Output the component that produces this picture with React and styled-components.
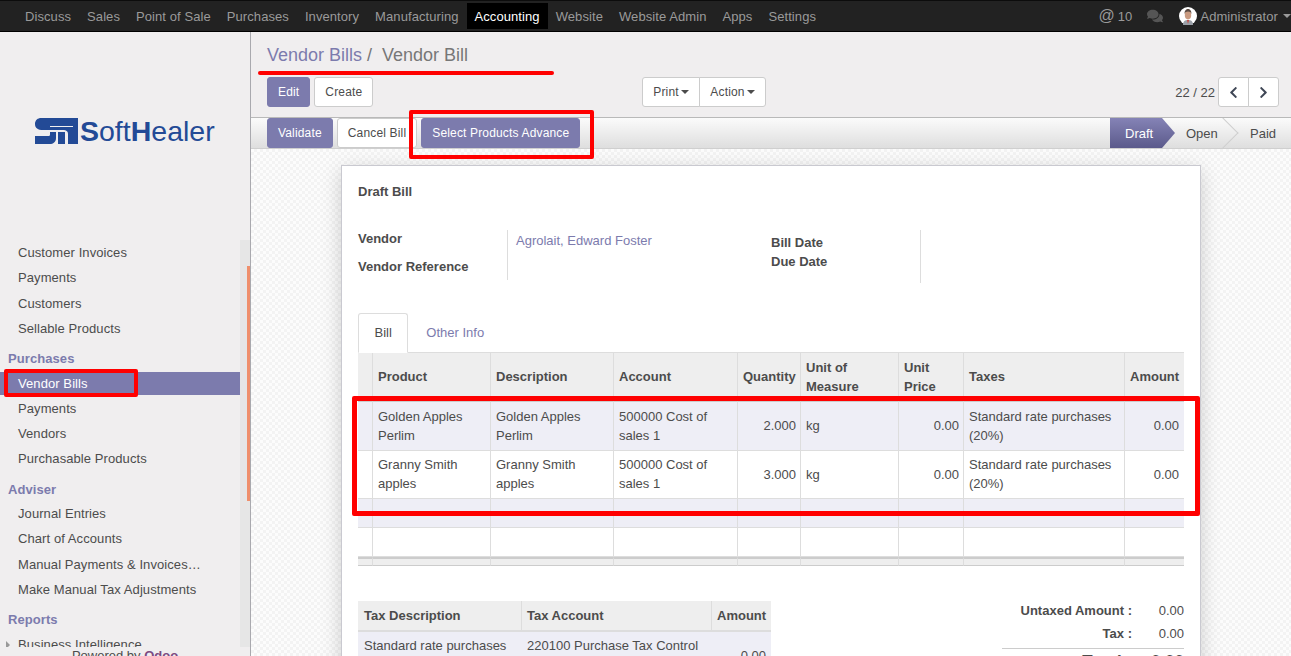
import React from "react";
import styled, { createGlobalStyle } from "styled-components";
import { FaComments, FaChevronLeft, FaChevronRight } from "react-icons/fa";

const GlobalStyle = createGlobalStyle`
  * { box-sizing: border-box; }
  html, body { margin: 0; height: 100%; overflow: hidden; }
  body {
    font-family: "Liberation Sans", Arial, sans-serif;
    font-size: 13px;
    color: #4c4c4c;
  }
`;

const Page = styled.div`
  position: relative;
  display: flex;
  flex-direction: column;
  height: 656px;
  overflow: hidden;
`;

const TopBar = styled.nav`
  display: flex;
  align-items: center;
  flex: none;
  height: 32px;
  padding: 0 0 0 17px;
  background: #222;
  border-top: 1px solid #0c0c0c;
  border-bottom: 1px solid #000;
  letter-spacing: 0.08px;
`;

const TopLink = styled.a`
  display: flex;
  align-items: center;
  height: 26px;
  padding: 0 8px;
  color: ${(p) => (p.$active ? "#fff" : "#9a9a9a")};
  background: ${(p) => (p.$active ? "#000" : "transparent")};
`;

const TopRight = styled.div`
  display: flex;
  align-items: center;
  margin-left: auto;
  color: #9a9a9a;
`;

const AtSign = styled.span`
  font-size: 16px;
  margin-right: 3px;
`;

const Count = styled.span`
  margin-right: 15px;
`;

const ChatIcon = styled(FaComments)`
  color: #555;
  font-size: 16px;
  margin-right: 16px;
`;

const Avatar = styled.svg`
  width: 18px;
  height: 18px;
  margin-right: 3px;
`;

const Caret = styled.span`
  display: inline-block;
  width: 0;
  height: 0;
  margin-left: ${(p) => p.$gap || 3}px;
  border-top: 4px solid ${(p) => p.$color || "currentColor"};
  border-left: 4px solid transparent;
  border-right: 4px solid transparent;
`;

const AdminMenu = styled.span`
  display: flex;
  align-items: center;
`;

const Body = styled.div`
  display: flex;
  flex: 1;
  min-height: 0;
`;

const Sidebar = styled.aside`
  display: flex;
  flex-direction: column;
  flex: none;
  width: 251px;
  background: #f0eeef;
  border-right: 1px solid #a9a9ae;
`;

const LogoBox = styled.div`
  display: flex;
  align-items: center;
  flex: none;
  height: 208px;
  padding: 0 0 10px 35px;
  color: #234a96;
  font-size: 28.5px;
  line-height: 1;
`;

const LogoMark = styled.svg`
  width: 43px;
  height: 26px;
  margin-right: 2px;
`;

const LogoStrong = styled.b`
  font-weight: 700;
`;

const MenuWrap = styled.div`
  display: flex;
  flex: 1;
  min-height: 0;
`;

const MenuList = styled.div`
  width: 240px;
  padding-top: 1px;
  overflow: hidden;
  letter-spacing: 0.08px;
`;

const Track = styled.div`
  display: flex;
  flex-direction: column;
  align-items: flex-end;
  width: 10px;
  padding-top: 26px;
  background: #e6e6e6;
`;

const Thumb = styled.div`
  width: 3px;
  height: 235px;
  background: #ef8f6c;
`;

const MenuTitle = styled.div`
  height: 23px;
  margin: 7px 0 1.5px;
  padding-left: 8px;
  line-height: 23px;
  font-weight: 700;
  color: #7c7bad;
`;

const MenuItem = styled.a`
  position: relative;
  display: block;
  height: 23.25px;
  margin-bottom: 2px;
  padding-left: 18px;
  line-height: 24px;
  white-space: nowrap;
  color: ${(p) => (p.$active ? "#fff" : "#4c4c4c")};
  background: ${(p) => (p.$active ? "#7c7bad" : "transparent")};

  ${(p) =>
    p.$arrow &&
    `&::before {
      content: "";
      position: absolute;
      left: 6px;
      top: 8px;
      border-left: 4px solid #999;
      border-top: 4px solid transparent;
      border-bottom: 4px solid transparent;
    }`}
`;

const PoweredBy = styled.div`
  flex: none;
  height: 9px;
  line-height: 18px;
  text-align: center;
  white-space: nowrap;
  background: #f0eeef;

  b {
    color: #7c4b82;
  }
`;

const Main = styled.main`
  display: flex;
  flex-direction: column;
  flex: 1;
  min-width: 0;
`;

const ControlPanel = styled.div`
  flex: none;
  height: 85px;
  padding: 0 12px 0 16px;
  background: #f0eeef;
`;

const Breadcrumb = styled.div`
  height: 45px;
  padding-top: 12px;
  font-size: 18px;
  line-height: 22px;
  color: #777;

  a {
    color: #7c7bad;
  }
`;

const ButtonRow = styled.div`
  display: flex;
  align-items: center;
`;

const LeftButtons = styled.div`
  display: flex;
  gap: 4px;
  width: 375px;
`;

const Button = styled.button`
  height: 30px;
  padding: 0 10px;
  border: 1px solid ${(p) => (p.$primary ? "#7c7bad" : "#ccc")};
  border-radius: 3px;
  background: ${(p) => (p.$primary ? "#7c7bad" : "#fff")};
  color: ${(p) => (p.$primary ? "#fff" : "#4c4c4c")};
  font: 12px "Liberation Sans", Arial, sans-serif;
  letter-spacing: 0.16px;
  white-space: nowrap;
`;

const Group = styled.div`
  display: flex;

  button {
    display: flex;
    align-items: center;
    justify-content: center;
    border-radius: 0;
  }
  button + button {
    margin-left: -1px;
  }
  button:first-child {
    border-radius: 3px 0 0 3px;
  }
  button:last-child {
    border-radius: 0 3px 3px 0;
  }
`;

const MenuButton = styled(Button)`
  width: ${(p) => p.$width}px;
  padding: 0;
`;

const Pager = styled.div`
  display: flex;
  align-items: center;
  margin-left: auto;
`;

const PagerText = styled.span`
  margin-right: 3px;
`;

const PagerButton = styled(Button)`
  width: 31px;
  padding: 0;
  color: #3f4756;
  font-size: 13px;
`;

const StatusBar = styled.div`
  display: flex;
  align-items: stretch;
  flex: none;
  height: 32px;
  padding-left: 16px;
  background: linear-gradient(#fbfbfb, #dedede);
  border-top: 1px solid #b9b9b9;
  border-bottom: 1px solid #cfcfcf;
`;

const StatusActions = styled.div`
  display: flex;
  gap: 4px;

  button {
    height: 30px;
  }
`;

const Steps = styled.div`
  display: flex;
  margin-left: auto;
`;

const Step = styled.div`
  position: relative;
  display: flex;
  align-items: center;
  width: ${(p) => p.$width}px;
  padding-left: ${(p) => p.$pad}px;
  overflow: hidden;
`;

const ActiveStep = styled(Step)`
  color: #fff;
  background: linear-gradient(#8583b6, #5b5a8b);
  clip-path: polygon(0 0, 52px 0, 100% 50%, 52px 100%, 0 100%);
`;

const ChevronStep = styled(Step)`
  &::after {
    content: "";
    position: absolute;
    right: 5px;
    top: 4px;
    width: 21px;
    height: 21px;
    transform: rotate(45deg);
    border-top: 1px solid #cfcfcf;
    border-right: 1px solid #cfcfcf;
  }
`;

const Content = styled.div`
  flex: 1;
  min-height: 0;
  padding: 16px 0 0 90px;
  overflow: hidden;
  background: repeating-conic-gradient(#f3f3f3 0 25%, #fcfcfc 0 50%) 0 0 / 6px 6px;
`;

const Sheet = styled.div`
  width: 860px;
  min-height: 600px;
  padding: 16px;
  background: #fff;
  border: 1px solid #c9c9d0;
  box-shadow: 0 5px 20px -1px rgba(0, 0, 0, 0.2);
`;

const SheetTitle = styled.div`
  height: 20px;
  line-height: 20px;
  font-weight: 700;
`;

const Fields = styled.div`
  display: flex;
  margin-top: 28px;
  height: 53px;
`;

const FieldColumn = styled.div`
  width: ${(p) => p.$width}px;
  height: ${(p) => p.$height}px;
  padding-top: ${(p) => p.$top || 0}px;
  border-right: ${(p) => (p.$line ? "1px solid #ddd" : "none")};
`;

const FieldLabel = styled.div`
  height: ${(p) => p.$height}px;
  line-height: ${(p) => p.$lineHeight || 19}px;
  font-weight: 700;
`;

const FieldValue = styled.a`
  display: block;
  padding: 1px 0 0 8px;
  line-height: 19px;
  color: #7c7bad;
`;

const Tabs = styled.div`
  display: flex;
  margin-top: 30px;
  height: 40px;
  border-bottom: 1px solid #ddd;
`;

const Tab = styled.a`
  display: flex;
  align-items: center;
  height: 40px;
  padding: 0 ${(p) => (p.$active ? 15.5 : 17)}px 2px;
  color: ${(p) => (p.$active ? "#4c4c4c" : "#7c7bad")};
  background: ${(p) => (p.$active ? "#fff" : "transparent")};
  border: 1px solid ${(p) => (p.$active ? "#ddd" : "transparent")};
  border-bottom-color: ${(p) => (p.$active ? "#fff" : "transparent")};
  border-radius: 3px 3px 0 0;
`;

const LinesTable = styled.table`
  width: 826px;
  table-layout: fixed;
  border-collapse: separate;
  border-spacing: 0;
`;

const HeadCell = styled.th`
  height: 49px;
  padding: 0 5px;
  line-height: 19px;
  text-align: ${(p) => (p.$right ? "right" : "left")};
  font-weight: 700;
  background: #eee;
  border-right: 1px solid #ddd;
  border-bottom: 2px solid #ccc;

  &:last-child {
    border-right: none;
  }
`;

const LineRow = styled.tr`
  height: ${(p) => p.$height}px;
  background: ${(p) => (p.$odd ? "#eeeef6" : "#fff")};
`;

const LineCell = styled.td`
  padding: 0 ${(p) => (p.$right ? 4 : 5)}px ${(p) => (p.$up ? 2 : 0)}px 5px;
  line-height: 19px;
  text-align: ${(p) => (p.$right ? "right" : "left")};
  border-right: 1px solid #ddd;
  border-bottom: 1px solid #ddd;

  &:last-child {
    border-right: none;
    padding-right: 5px;
  }
`;

const FootCell = styled.td`
  height: 9px;
  padding: 0;
  background: #eee;
  border-top: 2px solid #ccc;
  border-right: 1px solid #ddd;
  border-bottom: 1px solid #ccc;

  &:last-child {
    border-right: none;
  }
`;

const Bottom = styled.div`
  display: flex;
  justify-content: space-between;
  margin-top: 35px;
`;

const TaxTable = styled.table`
  width: 413px;
  table-layout: fixed;
  border-collapse: separate;
  border-spacing: 0;
`;

const TaxHead = styled.th`
  height: 31px;
  padding: 0 5px;
  text-align: ${(p) => (p.$right ? "right" : "left")};
  background: #eee;
  border-right: 1px solid #ddd;
  border-bottom: 2px solid #ddd;
  white-space: nowrap;

  &:first-child {
    padding-left: 6px;
  }
  &:last-child {
    border-right: none;
  }
`;

const TaxCell = styled.td`
  padding: 4px 5px;
  line-height: 19px;
  background: #eeeef6;
  vertical-align: ${(p) => (p.$right ? "middle" : "top")};
  text-align: ${(p) => (p.$right ? "right" : "left")};

  &:first-child {
    padding-left: 6px;
  }
`;

const Totals = styled.div`
  width: 182px;
  margin-top: -2px;
`;

const TotalRow = styled.div`
  display: flex;
  align-items: center;
  height: ${(p) => (p.$grand ? 26 : 23)}px;
  border-top: ${(p) => (p.$grand ? "1px solid #ccc" : "none")};
  margin-top: ${(p) => (p.$grand ? 3 : 0)}px;
  font-size: ${(p) => (p.$grand ? 17 : 13)}px;
  font-weight: ${(p) => (p.$grand ? 700 : 400)};
`;

const TotalLabel = styled.span`
  flex: 1;
  text-align: right;
  font-weight: 700;
`;

const TotalValue = styled.span`
  width: 52px;
  text-align: right;
`;

const RedBox = styled.div`
  position: absolute;
  left: ${(p) => p.$x}px;
  top: ${(p) => p.$y}px;
  width: ${(p) => p.$w}px;
  height: ${(p) => p.$h}px;
  border: ${(p) => p.$stroke}px solid #f00;
  border-radius: 2px;
  pointer-events: none;
`;

const RedLine = styled.div`
  position: absolute;
  left: 258px;
  top: 71px;
  width: 296px;
  height: 3.5px;
  background: #f00;
  border-radius: 2px;
`;

const topMenus = [
  "Discuss",
  "Sales",
  "Point of Sale",
  "Purchases",
  "Inventory",
  "Manufacturing",
  "Accounting",
  "Website",
  "Website Admin",
  "Apps",
  "Settings",
];

const lineColumns = [15, 118, 123, 124, 63, 98, 65, 161, 59];

const lines = [
  { name: "Golden Apples Perlim", qty: "2.000", height: 49, odd: true, numberUp: true },
  { name: "Granny Smith apples", qty: "3.000", height: 48, textUp: true },
];

function UserAvatar() {
  return (
    <Avatar viewBox="0 0 18 18">
      <circle cx="9" cy="9" r="9" fill="#fff" />
      <path d="M4 18c0-4 2-5 5-5s5 1 5 5z" fill="#9aa0a8" />
      <path d="M8 13h2l-1 4z" fill="#c9463c" />
      <ellipse cx="9" cy="8" rx="3.2" ry="4.4" fill="#c99a80" />
      <path d="M5.6 7c-.3-3.5 1.6-5 3.4-5s3.7 1.5 3.4 5c-.6-1.8-1.500-2.500-3.400-2.500S6.200 5.200 5.600 7z" fill="#5a4a42" />
    </Avatar>
  );
}

function SoftHealerMark() {
  return (
    <LogoMark viewBox="0 0 43 26">
      <path d="M6 0H43V26H33V16C33 13 31 12 28 12H8C3 12 0 10 0 6C0 2 3 0 6 0Z" fill="#234a96" />
      <path d="M15 8H38V9H15Z" fill="#f0eeef" />
      <path d="M0 18H13C14.5 18 15 17.500 15 16.500V14H21V20C21 24 18 26 15 26H0Z" fill="#234a96" />
      <path d="M23 14H30V26H23Z" fill="#234a96" />
    </LogoMark>
  );
}

export default function App() {
  return (
    <Page>
      <GlobalStyle />
      <TopBar>
        {topMenus.map((name) => (
          <TopLink key={name} $active={name === "Accounting"}>
            {name}
          </TopLink>
        ))}
        <TopRight>
          <AtSign>@</AtSign>
          <Count>10</Count>
          <ChatIcon />
          <UserAvatar />
          <AdminMenu>
            Administrator
            <Caret $gap={5} />
          </AdminMenu>
        </TopRight>
      </TopBar>

      <Body>
        <Sidebar>
          <LogoBox>
            <SoftHealerMark />
            <span>
              <LogoStrong>S</LogoStrong>oft<LogoStrong>H</LogoStrong>ealer
            </span>
          </LogoBox>
          <MenuWrap>
            <MenuList>
              <MenuItem>Customer Invoices</MenuItem>
              <MenuItem>Payments</MenuItem>
              <MenuItem>Customers</MenuItem>
              <MenuItem>Sellable Products</MenuItem>
              <MenuTitle>Purchases</MenuTitle>
              <MenuItem $active>Vendor Bills</MenuItem>
              <MenuItem>Payments</MenuItem>
              <MenuItem>Vendors</MenuItem>
              <MenuItem>Purchasable Products</MenuItem>
              <MenuTitle>Adviser</MenuTitle>
              <MenuItem>Journal Entries</MenuItem>
              <MenuItem>Chart of Accounts</MenuItem>
              <MenuItem>Manual Payments &amp; Invoices…</MenuItem>
              <MenuItem>Make Manual Tax Adjustments</MenuItem>
              <MenuTitle>Reports</MenuTitle>
              <MenuItem $arrow>Business Intelligence</MenuItem>
            </MenuList>
            <Track>
              <Thumb />
            </Track>
          </MenuWrap>
          <PoweredBy>
            Powered by <b>Odoo</b>
          </PoweredBy>
        </Sidebar>

        <Main>
          <ControlPanel>
            <Breadcrumb>
              <a>Vendor Bills</a> /&nbsp; Vendor Bill
            </Breadcrumb>
            <ButtonRow>
              <LeftButtons>
                <Button $primary>Edit</Button>
                <Button>Create</Button>
              </LeftButtons>
              <Group>
                <MenuButton $width={58}>
                  Print
                  <Caret $gap={2} />
                </MenuButton>
                <MenuButton $width={67}>
                  Action
                  <Caret $gap={2} />
                </MenuButton>
              </Group>
              <Pager>
                <PagerText>22 / 22</PagerText>
                <Group>
                  <PagerButton>
                    <FaChevronLeft />
                  </PagerButton>
                  <PagerButton>
                    <FaChevronRight />
                  </PagerButton>
                </Group>
              </Pager>
            </ButtonRow>
          </ControlPanel>

          <StatusBar>
            <StatusActions>
              <Button $primary>Validate</Button>
              <Button>Cancel Bill</Button>
              <Button $primary>Select Products Advance</Button>
            </StatusActions>
            <Steps>
              <ActiveStep $width={65} $pad={15}>
                Draft
              </ActiveStep>
              <ChevronStep $width={64} $pad={11}>
                Open
              </ChevronStep>
              <Step $width={52} $pad={11}>
                Paid
              </Step>
            </Steps>
          </StatusBar>

          <Content>
            <Sheet>
              <SheetTitle>Draft Bill</SheetTitle>
              <Fields>
                <FieldColumn $width={150} $height={50} $line>
                  <FieldLabel $height={28} $lineHeight={17}>
                    Vendor
                  </FieldLabel>
                  <FieldLabel $height={19} $lineHeight={17}>
                    Vendor Reference
                  </FieldLabel>
                </FieldColumn>
                <FieldColumn $width={263} $height={50}>
                  <FieldValue>Agrolait, Edward Foster</FieldValue>
                </FieldColumn>
                <FieldColumn $width={150} $height={53} $top={3} $line>
                  <FieldLabel $height={19}>Bill Date</FieldLabel>
                  <FieldLabel $height={19}>Due Date</FieldLabel>
                </FieldColumn>
              </Fields>

              <Tabs>
                <Tab $active>Bill</Tab>
                <Tab>Other Info</Tab>
              </Tabs>

              <LinesTable>
                <colgroup>
                  {lineColumns.map((w, i) => (
                    <col key={i} width={w} />
                  ))}
                </colgroup>
                <thead>
                  <tr>
                    <HeadCell />
                    <HeadCell>Product</HeadCell>
                    <HeadCell>Description</HeadCell>
                    <HeadCell>Account</HeadCell>
                    <HeadCell>Quantity</HeadCell>
                    <HeadCell>Unit of Measure</HeadCell>
                    <HeadCell>Unit Price</HeadCell>
                    <HeadCell>Taxes</HeadCell>
                    <HeadCell>Amount</HeadCell>
                  </tr>
                </thead>
                <tbody>
                  {lines.map((line) => (
                    <LineRow key={line.name} $height={line.height} $odd={line.odd}>
                      <LineCell />
                      <LineCell $up={line.textUp}>{line.name}</LineCell>
                      <LineCell $up={line.textUp}>{line.name}</LineCell>
                      <LineCell $up={line.textUp}>500000 Cost of sales 1</LineCell>
                      <LineCell $right $up={line.numberUp}>
                        {line.qty}
                      </LineCell>
                      <LineCell $up={line.numberUp}>kg</LineCell>
                      <LineCell $right $up={line.numberUp}>
                        0.00
                      </LineCell>
                      <LineCell $up={line.textUp}>Standard rate purchases (20%)</LineCell>
                      <LineCell $right $up={line.numberUp}>
                        0.00
                      </LineCell>
                    </LineRow>
                  ))}
                  <LineRow $height={29} $odd>
                    {lineColumns.map((w, i) => (
                      <LineCell key={i} />
                    ))}
                  </LineRow>
                  <LineRow $height={29}>
                    {lineColumns.map((w, i) => (
                      <LineCell key={i} />
                    ))}
                  </LineRow>
                </tbody>
                <tfoot>
                  <tr>
                    {lineColumns.map((w, i) => (
                      <FootCell key={i} />
                    ))}
                  </tr>
                </tfoot>
              </LinesTable>

              <Bottom>
                <TaxTable>
                  <colgroup>
                    <col width={164} />
                    <col width={190} />
                    <col width={59} />
                  </colgroup>
                  <thead>
                    <tr>
                      <TaxHead>Tax Description</TaxHead>
                      <TaxHead>Tax Account</TaxHead>
                      <TaxHead $right>Amount</TaxHead>
                    </tr>
                  </thead>
                  <tbody>
                    <tr>
                      <TaxCell>Standard rate purchases (20%)</TaxCell>
                      <TaxCell>220100 Purchase Tax Control</TaxCell>
                      <TaxCell $right>0.00</TaxCell>
                    </tr>
                  </tbody>
                </TaxTable>
                <Totals>
                  <TotalRow>
                    <TotalLabel>Untaxed Amount :</TotalLabel>
                    <TotalValue>0.00</TotalValue>
                  </TotalRow>
                  <TotalRow>
                    <TotalLabel>Tax :</TotalLabel>
                    <TotalValue>0.00</TotalValue>
                  </TotalRow>
                  <TotalRow $grand>
                    <TotalLabel>Total :</TotalLabel>
                    <TotalValue>0.00</TotalValue>
                  </TotalRow>
                </Totals>
              </Bottom>
            </Sheet>
          </Content>
        </Main>
      </Body>

      <RedLine />
      <RedBox $x={409} $y={110} $w={185} $h={49} $stroke={4.5} />
      <RedBox $x={4} $y={369} $w={134} $h={28} $stroke={4} />
      <RedBox $x={352} $y={396} $w={848} $h={120} $stroke={5} />
    </Page>
  );
}
